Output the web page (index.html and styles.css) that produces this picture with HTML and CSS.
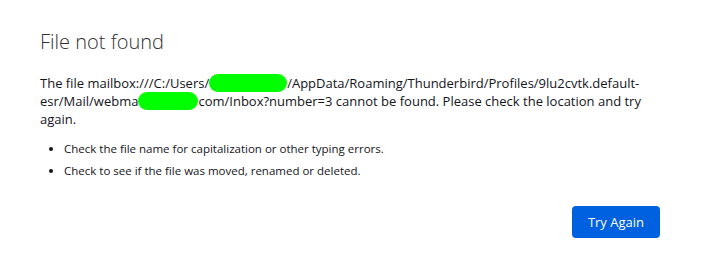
FILE: index.html
```html
<!DOCTYPE html>
<html lang="en">
<head>
  <meta charset="UTF-8" />
  <title>Problem loading page</title>
  <link rel="stylesheet" href="styles.css">
</head>
<body>
  <div class="error-container">
    <h1 class="error-title">File not found</h1>

    <p class="error-desc">The file mailbox:///C:/Users/<span class="redact redact-user"></span>/AppData/Roaming/Thunderbird/Profiles/9lu2cvtk.default-esr/Mail/webma<span class="redact redact-host"></span>com/Inbox?number=3 cannot be found. Please check the location and try again.</p>

    <ul class="error-tips">
      <li>Check the file name for capitalization or other typing errors.</li>
      <li>Check to see if the file was moved, renamed or deleted.</li>
    </ul>

    <div class="button-row">
      <button class="try-again">Try Again</button>
    </div>
  </div>
</body>
</html>
```

FILE: styles.css
```css
:root {
  --text: #15141a;
  --primary: #0061e0;
  --redact: #00ff00;
}

body {
  margin: 0;
  padding: 0;
  font-family: 'Open Sans', 'Noto Sans', Arial, sans-serif;
  background: #ffffff;
  color: var(--text);
}

.error-container {
  width: 628px;
  padding: 28px 0 0 40px;
}

.error-title {
  margin: 0;
  font-size: 20px;
  font-weight: 300;
  color: #333;
  line-height: 28px;
}

.error-desc {
  margin: 18px 0 0;
  font-size: 13px;
  line-height: 18px;
}

/* green marker over the hidden parts of the path */
.redact {
  display: inline-block;
  height: 18px;
  vertical-align: top;
  background: var(--redact);
  border-radius: 9px;
}

.redact-user {
  width: 78px;
}

.redact-host {
  width: 60px;
}

.error-tips {
  margin: 10px 0 0;
  padding-left: 24px;
  font-size: 11.5px;
  line-height: 22px;
}

.button-row {
  display: flex;
  justify-content: flex-end;
  margin-top: 24px;
  padding-right: 8px;
}

.try-again {
  background: var(--primary);
  color: #fff;
  border: none;
  border-radius: 4px;
  padding: 0 16px;
  height: 32px;
  font-family: inherit;
  font-size: 13px;
  cursor: pointer;
}
```
